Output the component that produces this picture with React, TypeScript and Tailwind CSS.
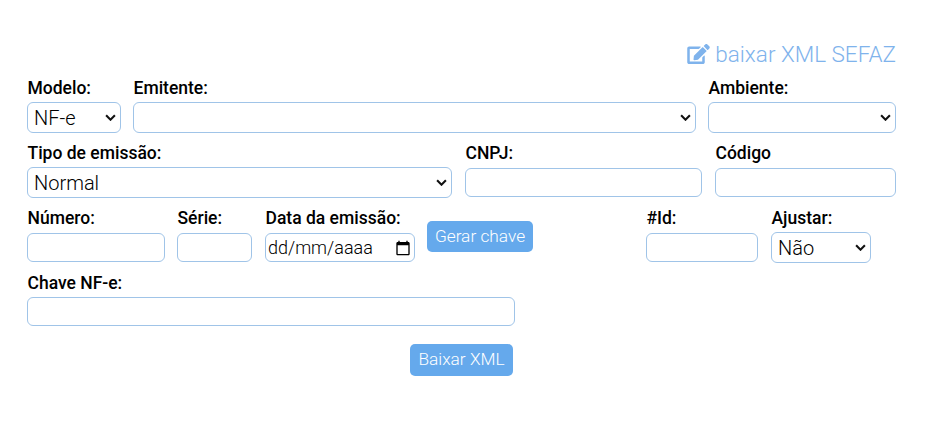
import { FaEdit } from "react-icons/fa"

const labelCls = "block h-[19px] pl-[0.5px] text-[17.5px] leading-[21px] font-medium text-black"
const inputCls = "mt-[6px] block w-full h-[29px] rounded-[6px] border border-[#a0c4e8] bg-white px-1.5 text-[19.2px] font-light outline-none"
const selectCls = "block w-full h-[31px] appearance-none rounded-[6px] border border-[#a0c4e8] bg-white pl-[6px] pr-5 text-[20px] leading-[24px] font-light text-black outline-none"

function Field({ label, className, children }: { label: string; className: string; children: React.ReactNode }) {
  return (
    <div className={className}>
      <label className={labelCls}>{label}</label>
      {children}
    </div>
  )
}

function Select({ options = [""] }: { options?: string[] }) {
  return (
    <div className="relative mt-[5px]">
      <select className={selectCls}>
        {options.map((o) => (
          <option key={o}>{o}</option>
        ))}
      </select>
      <svg
        viewBox="0 0 10 6"
        className="pointer-events-none absolute right-[5px] top-[12px] h-[7px] w-[11px] text-[#111]"
        fill="none"
        stroke="currentColor"
        strokeWidth="1.9"
      >
        <path d="M1 1l4 4 4-4" />
      </svg>
    </div>
  )
}

export default function App() {
  return (
    <div className="h-[448px] w-[934px] bg-white pl-[27px] pr-[38px] pt-[41px] font-['Roboto',sans-serif] font-light">
      <div className="flex h-[27px] items-center justify-end gap-[5px] text-[22.5px] leading-[27px] text-[#7fb3ec]">
        <FaEdit className="mb-[2px] h-[20px] w-[23px]" />
        <a>baixar XML SEFAZ</a>
      </div>

      <div className="mt-[10px] flex gap-[12px]">
        <Field label="Modelo:" className="w-[94px]">
          <Select options={["NF-e", "NFC-e"]} />
        </Field>
        <Field label="Emitente:" className="w-[563px]">
          <Select />
        </Field>
        <Field label="Ambiente:" className="w-[188px]">
          <Select />
        </Field>
      </div>

      <div className="mt-[10px] flex gap-[13px]">
        <Field label="Tipo de emissão:" className="w-[425px]">
          <Select options={["Normal"]} />
        </Field>
        <Field label="CNPJ:" className="w-[237px]">
          <input className={inputCls} />
        </Field>
        <Field label="Código" className="w-[181px]">
          <input className={inputCls} />
        </Field>
      </div>

      <div className="mt-[10px] flex">
        <Field label="Número:" className="w-[138px]">
          <input className={inputCls} />
        </Field>
        <Field label="Série:" className="ml-[12px] w-[75px]">
          <input className={inputCls} />
        </Field>
        <Field label="Data da emissão:" className="ml-[13px] w-[150px]">
          <div className="mt-[6px] flex h-[29px] w-full items-center justify-between rounded-[6px] border border-[#a0c4e8] bg-white pl-[2px] pr-[3px] text-[18px] font-light text-black">
            <span>dd/mm/aaaa</span>
            <svg viewBox="0 0 24 24" className="h-[16px] w-[16px]" fill="currentColor">
              <path d="M20 3h-1V1h-2v2H7V1H5v2H4c-1.1 0-2 .9-2 2v16c0 1.1.9 2 2 2h16c1.1 0 2-.9 2-2V5c0-1.100-.9-2-2-2zm0 18H4V8h16v13z" />
            </svg>
          </div>
        </Field>
        <button className="ml-[12px] mt-[13px] h-[31px] w-[106px] rounded-[5px] bg-[#65a9ec] text-[17.3px] font-light text-white">
          Gerar chave
        </button>
        <Field label="#Id:" className="ml-[113px] w-[112px]">
          <input className={inputCls} />
        </Field>
        <Field label="Ajustar:" className="ml-[13px] w-[100px]">
          <Select options={["Não", "Sim"]} />
        </Field>
      </div>

      <div className="mt-[10px]">
        <Field label="Chave NF-e:" className="w-[488px]">
          <input className={inputCls.replace("mt-[6px]", "mt-[5px]")} />
        </Field>
      </div>

      <div className="mt-[18px] flex pl-[383px]">
        <button className="h-[32px] w-[103px] rounded-[5px] bg-[#65a9ec] text-[17.3px] font-light text-white">
          Baixar XML
        </button>
      </div>
    </div>
  )
}
